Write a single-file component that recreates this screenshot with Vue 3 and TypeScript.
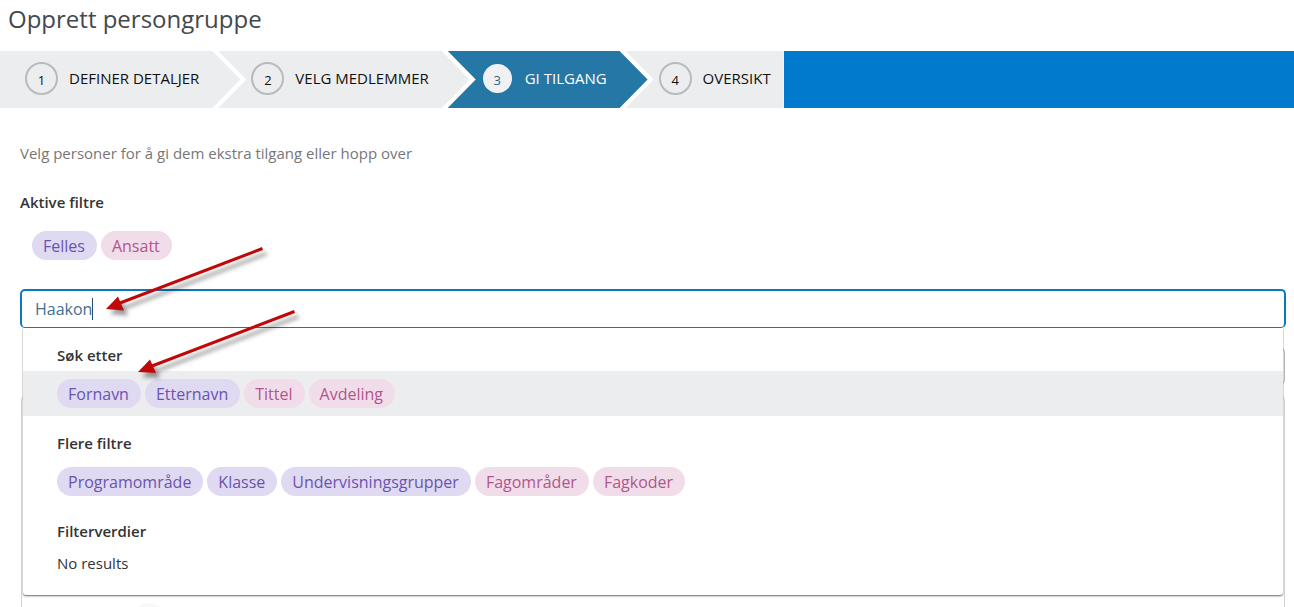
<script setup lang="ts">
import { ref } from 'vue'

interface Step {
  label: string
  active?: boolean
}

interface Chip {
  label: string
  tone: 'violet' | 'pink'
}

const steps: Step[] = [
  { label: 'DEFINER DETALJER' },
  { label: 'VELG MEDLEMMER' },
  { label: 'GI TILGANG', active: true },
  { label: 'OVERSIKT' },
]

const activeFilters: Chip[] = [
  { label: 'Felles', tone: 'violet' },
  { label: 'Ansatt', tone: 'pink' },
]

const searchFields: Chip[] = [
  { label: 'Fornavn', tone: 'violet' },
  { label: 'Etternavn', tone: 'violet' },
  { label: 'Tittel', tone: 'pink' },
  { label: 'Avdeling', tone: 'pink' },
]

const moreFilters: Chip[] = [
  { label: 'Programområde', tone: 'violet' },
  { label: 'Klasse', tone: 'violet' },
  { label: 'Undervisningsgrupper', tone: 'violet' },
  { label: 'Fagområder', tone: 'pink' },
  { label: 'Fagkoder', tone: 'pink' },
]

const query = ref('Haakon')
</script>

<template>
  <div class="page">
    <h1 class="title">Opprett persongruppe</h1>

    <nav class="wizard">
      <ol class="steps">
        <li v-for="(step, i) in steps" :key="step.label" class="step" :class="{ active: step.active }">
          <button type="button" class="step-button">
            <span class="number">{{ i + 1 }}</span>
            <span class="label">{{ step.label }}</span>
          </button>
        </li>
      </ol>
    </nav>

    <main class="content">
      <p class="intro">Velg personer for å gi dem ekstra tilgang eller hopp over</p>
      <h2 class="heading">Aktive filtre</h2>
      <div class="chips active-chips">
        <button v-for="c in activeFilters" :key="c.label" type="button" class="chip" :class="c.tone">{{ c.label }}</button>
      </div>

      <div class="search">
        <input v-model="query" class="search-input" type="text" aria-label="Søk" autocomplete="off" />
        <span class="caret"></span>

        <div class="dropdown">
          <h3 class="heading group-heading">Søk etter</h3>
          <div class="chips row highlighted">
            <button v-for="c in searchFields" :key="c.label" type="button" class="chip" :class="c.tone">{{ c.label }}</button>
          </div>
          <h3 class="heading group-heading">Flere filtre</h3>
          <div class="chips row">
            <button v-for="c in moreFilters" :key="c.label" type="button" class="chip" :class="c.tone">{{ c.label }}</button>
          </div>
          <h3 class="heading group-heading">Filterverdier</h3>
          <p class="empty">No results</p>
        </div>
      </div>

      <div class="sort-box"></div>
      <section class="results">
        <span class="avatar"></span>
      </section>
    </main>

    <svg class="arrows" width="320" height="400" viewBox="0 0 320 400" aria-hidden="true">
      <g class="arrow">
        <path d="M262.500 248.500 L120 303" />
        <polygon points="106,309 118,296.500 124,310.500" />
      </g>
      <g class="arrow">
        <path d="M294.500 311.500 L152 366" />
        <polygon points="138,372 150,359.500 156,373" />
      </g>
    </svg>
  </div>
</template>

<style>
body {
  background: #fff;
  overflow: hidden;
}
</style>

<style scoped>
.page {
  position: relative;
  height: 100vh;
  overflow: hidden;
  box-sizing: border-box;
  font-family: 'Open Sans', 'Noto Sans', sans-serif;
  font-size: 15px;
  color: #333;
}

.title {
  margin: 0;
  padding: 2px 8px 15px;
  font-size: 24px;
  line-height: 34px;
  font-weight: 400;
  color: #44484c;
}

.wizard {
  display: flex;
  background: #007acc;
}

.steps {
  display: flex;
  margin: 0;
  padding: 0;
  list-style: none;
  background: #fff;
}

.step {
  margin-left: -22px;
  background: #ecedef;
  clip-path: polygon(0 0, calc(100% - 28px) 0, 100% 50%, calc(100% - 28px) 100%, 0 100%, 28px 50%);
}

.step:first-child {
  margin-left: 0;
  clip-path: polygon(0 0, calc(100% - 28px) 0, 100% 50%, calc(100% - 28px) 100%, 0 100%);
}

.step:last-child {
  clip-path: polygon(0 0, 100% 0, 100% 100%, 0 100%, 28px 50%);
}

.step.active {
  background: #2577a5;
}

.step-button {
  display: flex;
  align-items: center;
  gap: 11px;
  height: 57px;
  padding: 0 41px 2px 33px;
  border: 0;
  background: none;
  font: inherit;
  color: #111;
  white-space: nowrap;
}

.step:first-child .step-button {
  padding-left: 25px;
}

.step:last-child .step-button {
  padding-right: 13px;
}

.active .step-button {
  color: #fff;
}

.label {
  padding-bottom: 2px;
}

.number {
  box-sizing: border-box;
  width: 33px;
  height: 33px;
  padding-top: 2px;
  border: 2px solid #b7bbbf;
  border-radius: 50%;
  font-size: 13px;
  line-height: 28px;
  text-align: center;
}

.active .number {
  border-color: #2577a5;
  background: #f0f1f3;
  color: #3a6078;
}

.content {
  padding: 33px 8px 0 20px;
}

.intro {
  margin: 0 0 25px;
  line-height: 24px;
  color: #777;
}

.heading {
  margin: 0;
  font-size: 15px;
  line-height: 24px;
  font-weight: 600;
  color: #333;
}

.chips {
  display: flex;
  gap: 4px;
}

.active-chips {
  padding: 17px 12px 29px;
}

.chip {
  height: 29px;
  padding: 0 12px 0 11px;
  border: 0;
  border-radius: 15px;
  font: inherit;
  font-size: 16px;
  line-height: 28px;
}

.violet {
  background: #dfd9f1;
  color: #6a54b0;
}

.pink {
  background: #f1dde9;
  color: #b0568c;
}

.search {
  position: relative;
}

.search-input {
  display: block;
  box-sizing: border-box;
  width: 100%;
  height: 39px;
  padding: 0 13px;
  border: 2px solid #0a78c2;
  border-bottom: 1px solid #1f7a90;
  border-radius: 5px;
  outline: 0;
  background: #fff;
  font: inherit;
  font-size: 16px;
  color: #3f708f;
}

.caret {
  position: absolute;
  left: 72px;
  top: 9px;
  width: 1px;
  height: 22px;
  background: #234f70;
}

.dropdown {
  position: absolute;
  z-index: 1;
  top: 100%;
  left: 3px;
  right: 3px;
  padding-bottom: 20px;
  border-radius: 0 0 3px 3px;
  background: #fff;
  box-shadow: 0 1px 2px rgba(0, 0, 0, 0.6);
  clip-path: inset(0 -1px -6px);
}

.group-heading {
  padding: 15px 34px 4px;
}

.row {
  padding: 8px 34px;
}

.highlighted {
  background: #ecedef;
}

.empty {
  margin: 0;
  padding: 4px 34px 0;
  line-height: 24px;
}

.sort-box {
  height: 34px;
  margin: 20px 1px 12px 3px;
  border: 1px solid #b5b5b5;
  border-radius: 4px;
}

.results {
  height: 300px;
  margin: 0 1px;
  padding: 206px 110px 0;
  border: 1px solid #d2d2d2;
  border-radius: 4px;
}

.avatar {
  display: block;
  width: 34px;
  height: 34px;
  border-radius: 50%;
  background: #f8f8f8;
}

.arrows {
  position: absolute;
  z-index: 2;
  left: 0;
  top: 0;
  pointer-events: none;
}

.arrow {
  fill: #c00808;
  filter: drop-shadow(4px 5px 2px rgba(0, 0, 0, 0.4));
}

.arrow path {
  stroke: #c00808;
  stroke-width: 3;
}
</style>
